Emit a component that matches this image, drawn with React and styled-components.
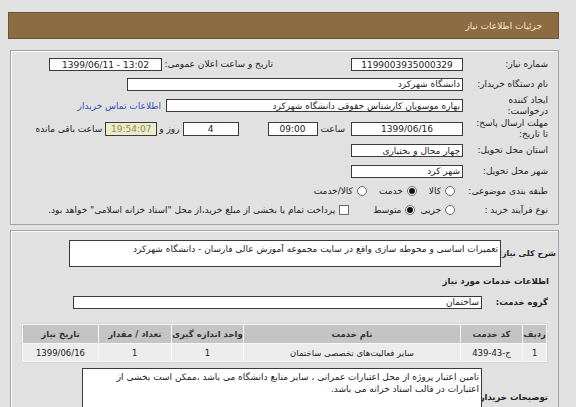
import React from "react";
import styled, { createGlobalStyle } from "styled-components";

const Global = createGlobalStyle`
  html, body { margin: 0; padding: 0; background: #e1e1e1; }
  body { font-family: "DejaVu Sans", Tahoma, sans-serif; font-size: 9px; color: #222; }
`;

const Page = styled.div`
  width: 551px;
  margin: 12px 0 0 8px;
  direction: rtl;
`;

const Header = styled.div`
  height: 27px;
  background: #8c6d43;
  border: 1px solid #6e5432;
  box-sizing: border-box;
  display: flex;
  align-items: center;
  padding-right: 16px;
  color: #f2e6d2;
  font-size: 9px;
`;

const Panel = styled.div`
  margin: ${(p) => p.$mt}px 0 0 2px;
  border: 1px solid #a3a3a3;
  box-shadow: inset 1px 1px 0 #fafafa;
  padding: ${(p) => p.$pad};
  box-sizing: border-box;
  height: ${(p) => (p.$h ? p.$h + "px" : "auto")};
  overflow: hidden;
`;

const Row = styled.div`
  display: flex;
  align-items: ${(p) => (p.$top ? "flex-start" : "center")};
  height: ${(p) => p.$h}px;
  margin-top: ${(p) => p.$mt || 0}px;
`;

const Label = styled.div`
  width: ${(p) => p.$w || 95}px;
  flex: none;
  padding-right: ${(p) => p.$pr ?? 10}px;
  margin-top: ${(p) => p.$mt || 0}px;
  box-sizing: border-box;
  line-height: 11px;
  font-weight: ${(p) => (p.$bold ? "bold" : "normal")};
  font-size: ${(p) => (p.$bold ? "8.5px" : "9px")};
  white-space: nowrap;
`;

const CompactLabel = styled(Label)`
  font-size: 8px;
`;

const Text = styled.span`
  flex: none;
  margin-right: ${(p) => p.$mr || 0}px;
  white-space: nowrap;
`;

const Field = styled.div`
  flex: none;
  width: ${(p) => p.$w}px;
  height: ${(p) => p.$h || 13}px;
  margin-right: ${(p) => p.$mr || 0}px;
  box-sizing: border-box;
  border: 1px solid #3a3a3a;
  background: ${(p) => p.$bg || "#fff"};
  color: ${(p) => p.$color || "#222"};
  display: flex;
  align-items: ${(p) => (p.$top ? "flex-start" : "center")};
  justify-content: ${(p) => (p.$center ? "center" : "flex-start")};
  padding: ${(p) => (p.$top ? "2px 2px 0" : "0 2px")};
  line-height: 12px;
  white-space: ${(p) => (p.$wrap ? "normal" : "nowrap")};
  overflow: hidden;
  direction: ${(p) => (p.$ltr ? "ltr" : "rtl")};
`;

const LinkText = styled.span`
  margin-right: 5px;
  color: #2f4fb6;
  white-space: nowrap;
`;

const Option = styled.label`
  display: flex;
  align-items: center;
  margin-right: ${(p) => p.$mr || 0}px;
  white-space: nowrap;
`;

const Radio = styled.span`
  width: 10px;
  height: 10px;
  border-radius: 50%;
  border: 1px solid #6a6a6a;
  background: #fff;
  box-sizing: border-box;
  margin-left: 4px;
  display: inline-flex;
  align-items: center;
  justify-content: center;
  &::after {
    content: "";
    width: 6px;
    height: 6px;
    border-radius: 50%;
    background: ${(p) => (p.$on ? "#111" : "transparent")};
  }
`;

const Check = styled.span`
  width: 10px;
  height: 10px;
  border: 1px solid #6a6a6a;
  background: #fff;
  box-sizing: border-box;
  margin-left: 4px;
`;

const Heading = styled.div`
  font-weight: bold;
  font-size: 8.5px;
  padding-right: ${(p) => p.$pr}px;
  height: ${(p) => p.$h}px;
  display: flex;
  align-items: center;
`;

const Table = styled.table`
  width: 527px;
  margin: ${(p) => p.$mt}px 10px 0 0;
  border-collapse: separate;
  border-spacing: 1px;
  background: #f7f7f7;
  border: 1px solid #d6d6d6;
  font-size: 8.5px;
`;

const Th = styled.th`
  background: #c4c4c4;
  height: 18px;
  font-weight: bold;
  color: #333;
  padding: 0;
  width: ${(p) => p.$w}px;
`;

const Td = styled.td`
  background: #ececec;
  height: 17px;
  text-align: center;
  padding: 0;
  color: #222;
`;

const columns = [
  { t: "ردیف", w: 22 },
  { t: "کد خدمت", w: 62 },
  { t: "نام خدمت", w: 216 },
  { t: "واحد اندازه گیری", w: 72 },
  { t: "تعداد / مقدار", w: 72 },
  { t: "تاریخ نیاز", w: 75 },
];
const rowData = ["1", "ج-43-439", "سایر فعالیت‌های تخصصی ساختمان", "1", "1", "1399/06/16"];

export default function App() {
  return (
    <>
      <Global />
      <Page>
        <Header>جزئیات اطلاعات نیاز</Header>
        <Panel $mt={11} $pad="4px 0 4px 0" $h={175}>
          <Row $h={19}>
            <Label>شماره نیاز:</Label>
            <Field $w={112} $center $ltr>1199003935000329</Field>
            <Label $w={189} $pr={78}>تاریخ و ساعت اعلان عمومی:</Label>
            <Field $w={113} $center $ltr>1399/06/11 - 13:02</Field>
          </Row>
          <Row $h={20}>
            <Label>نام دستگاه خریدار:</Label>
            <Field $w={336}>دانشگاه شهرکرد</Field>
          </Row>
          <Row $h={23}>
            <Label>
              ایجاد کننده
              <br />
              درخواست:
            </Label>
            <Field $w={297}>بهاره موسویان کارشناس حقوقی دانشگاه شهرکرد</Field>
            <LinkText>اطلاعات تماس خریدار</LinkText>
          </Row>
          <Row $h={23}>
            <Label>
              مهلت ارسال پاسخ:
              <br />
              تا تاریخ:
            </Label>
            <Field $w={112} $h={14} $center $ltr>1399/06/16</Field>
            <Text $mr={6}>ساعت</Text>
            <Field $w={50} $h={14} $mr={3} $center $ltr>09:00</Field>
            <Field $w={56} $h={14} $mr={29} $center>4</Field>
            <Text $mr={3}>روز و</Text>
            <Field $w={52} $h={14} $mr={2} $center $ltr $bg="#ececc6" $color="#8b8b6b">19:54:07</Field>
            <Text $mr={3}>ساعت باقی مانده</Text>
          </Row>
          <Row $h={21}>
            <Label>استان محل تحویل:</Label>
            <Field $w={112}>چهار محال و بختیاری</Field>
          </Row>
          <Row $h={20}>
            <Label>شهر محل تحویل:</Label>
            <Field $w={112}>شهر کرد</Field>
          </Row>
          <Row $h={20}>
            <Label>طبقه بندی موضوعی:</Label>
            <Option $mr={8}><Radio />کالا</Option>
            <Option $mr={12}><Radio $on />خدمت</Option>
            <Option $mr={12}><Radio />کالا/خدمت</Option>
          </Row>
          <Row $h={18}>
            <Label>نوع فرآیند خرید :</Label>
            <Option $mr={8}><Radio />جزیی</Option>
            <Option $mr={5}><Radio $on />متوسط</Option>
            <Option $mr={24}>
              <Check />
              پرداخت تمام یا بخشی از مبلغ خرید،از محل "اسناد خزانه اسلامی" خواهد بود.
            </Option>
          </Row>
        </Panel>
        <Panel $mt={5} $pad="9px 0 0 0" $h={200}>
          <Row $h={27}>
            <CompactLabel $w={57} $pr={2} $bold>شرح کلی نیاز:</CompactLabel>
            <Field $w={432} $h={27} $top>
              تعمیرات اساسی و محوطه سازی واقع در سایت مجموعه آموزش عالی فارسان - دانشگاه شهرکرد
            </Field>
          </Row>
          <Heading $pr={9} $h={28}>اطلاعات خدمات مورد نیاز</Heading>
          <Row $h={14}>
            <Label $w={76} $bold>گروه خدمت:</Label>
            <Field $w={409}>ساختمان</Field>
          </Row>
          <Table $mt={14}>
            <thead>
              <tr>
                {columns.map((c) => (
                  <Th key={c.t} $w={c.w}>{c.t}</Th>
                ))}
              </tr>
            </thead>
            <tbody>
              <tr>
                {rowData.map((d, i) => (
                  <Td key={i}>{d}</Td>
                ))}
              </tr>
            </tbody>
          </Table>
          <Row $h={60} $top $mt={5}>
            <Label $w={76} $bold $mt={24}>توضیحات خریدار:</Label>
            <Field $w={400} $h={60} $top $wrap>
              تامین اعتبار پروژه از محل اعتبارات عمرانی ، سایر منابع دانشگاه می باشد ،ممکن است بخشی از اعتبارات در قالب اسناد خزانه می باشد.
            </Field>
          </Row>
        </Panel>
      </Page>
    </>
  );
}
